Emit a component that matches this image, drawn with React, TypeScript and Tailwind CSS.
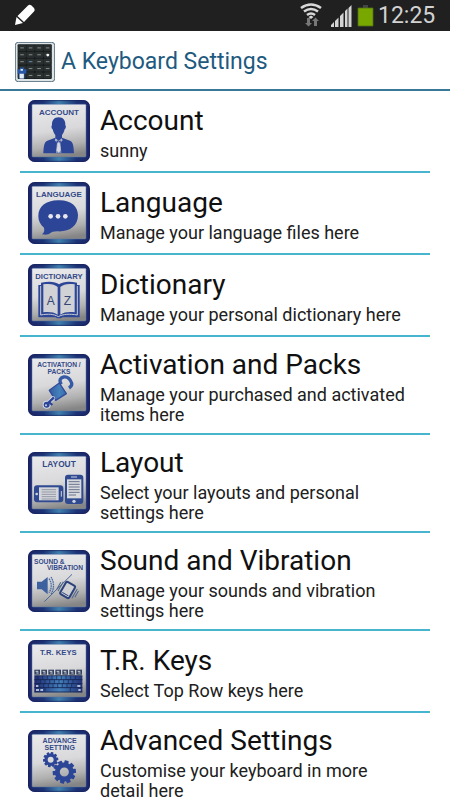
import React, { useId } from "react";

const BLUE = "#2c4596";

function Frame({ children, label }: { children: (fill: string) => React.ReactNode; label: string }) {
  const id = useId();
  return (
    <svg viewBox="23 16 186 186" role="img" aria-label={label} className="size-[62px] shrink-0">
      <defs>
        <linearGradient id={`${id}-edge`} x1="0" x2="1" y1="0" y2="0">
          <stop offset="0" stopColor="#1d2668" />
          <stop offset="0.25" stopColor="#1c3476" />
          <stop offset="0.5" stopColor="#3f80ae" />
          <stop offset="0.78" stopColor="#1c3476" />
          <stop offset="1" stopColor="#1d2668" />
        </linearGradient>
        <linearGradient id={`${id}-panel`} x1="0.3" x2="0.45" y1="0" y2="1">
          <stop offset="0" stopColor="#e9e9eb" />
          <stop offset="0.5" stopColor="#d9d9db" />
          <stop offset="0.8" stopColor="#b0b0b1" />
          <stop offset="1" stopColor="#858586" />
        </linearGradient>
        <linearGradient id={`${id}-shine`} gradientUnits="userSpaceOnUse" x1="45" x2="190" y1="0" y2="0">
          <stop offset="0" stopColor="#202d73" />
          <stop offset="0.5" stopColor="#4481bd" />
          <stop offset="1" stopColor="#202d73" />
        </linearGradient>
      </defs>
      <rect x="23" y="16" width="186" height="186" rx="20" fill={`url(#${id}-edge)`} />
      <rect x="25" y="18" width="182" height="182" rx="18" fill="none" stroke="#18215c" strokeWidth="3" opacity="0.7" />
      <rect x="35" y="29" width="162" height="158" rx="3" fill={`url(#${id}-panel)`} stroke="#5774a8" strokeWidth="1.5" />
      {children(`url(#${id}-shine)`)}
    </svg>
  );
}

function Caption({ x = 116, y, size = 23, children }: { x?: number; y: number; size?: number; children: string }) {
  return (
    <text x={x} y={y} fontSize={size} textAnchor="middle" fill="#344a88" className="font-['Liberation_Sans',sans-serif] font-bold">
      {children}
    </text>
  );
}

function AccountIcon() {
  return (
    <Frame label="Account">
      {() => (
        <>
          <Caption y={62} size={24}>ACCOUNT</Caption>
          <path fill={BLUE} d="M115 68c-14 0-21 10-20 24-3 1-2 10 2 12 2 9 5 13 8 17v8l-24 9c-8 3-11 13-12 38h92c-1-25-4-35-12-38l-24-9v-8c3-4 6-8 8-17 4-2 5-11 2-12 1-14-6-24-20-24z" />
          <path fill="#aeb7d0" d="m106 131 9 8 9-8 3 6-7 7 3 30h-16l3-30-7-7z" />
          <path fill={BLUE} d="m110 137 5 4 5-4 2 6-5 4 4 26h-12l4-26-5-4z" />
          <path fill="#d6d8df" d="m112 143h6l3 26-6 5-6-5z" />
        </>
      )}
    </Frame>
  );
}

function LanguageIcon() {
  return (
    <Frame label="Language">
      {() => (
        <>
          <Caption y={61} size={24}>LANGUAGE</Caption>
          <path fill={BLUE} d="M113 71c38-2 60 18 60 45 0 32-25 50-62 48-12 0-17 2-22 6-6 5-13 5-24 3 7-6 8-10 6-20-11-8-17-21-17-35 0-29 23-46 59-47z" />
          <circle cx="91" cy="119" r="7" fill="#e7e8ed" />
          <circle cx="113" cy="119" r="7" fill="#e7e8ed" />
          <circle cx="135" cy="119" r="7" fill="#e7e8ed" />
        </>
      )}
    </Frame>
  );
}

function DictionaryIcon() {
  return (
    <Frame label="Dictionary">
      {() => (
        <>
          <Caption y={60} size={23}>DICTIONARY</Caption>
          <path fill={BLUE} d="M54 79h8v-7c24-5 43-4 54 5 12-9 31-10 54-5v7h8v97h-52c-2 4-18 4-20 0H54z" />
          <path fill="#d1d2d5" d="M69 77c19-3 33-1 43 8v83c-12-8-26-9-43-7zM163 77c-19-3-33-1-43 8v83c12-8 26-9 43-7z" />
          <path fill="none" stroke="#c6cad5" strokeWidth="3" d="M61 82v87c23-4 40-3 53 5 14-8 34-9 57-5V82" />
          <text x="91" y="138" fontSize="36" textAnchor="middle" fill="#344577" className="font-['Liberation_Sans',sans-serif]">A</text>
          <text x="141" y="138" fontSize="36" textAnchor="middle" fill="#344577" className="font-['Liberation_Sans',sans-serif]">Z</text>
        </>
      )}
    </Frame>
  );
}

function ActivationIcon() {
  return (
    <Frame label="Activation and Packs">
      {(shine) => (
        <>
          <Caption y={55} size={20}>ACTIVATION /</Caption>
          <Caption y={75} size={20}>PACKS</Caption>
          <path fill="none" stroke="#365aa5" strokeWidth="10" d="M123 107c-8-12-3-20 7-22 13-2 20 8 24 18 2 7-2 11-8 15" />
          <path fill={shine} stroke="#304b98" strokeWidth="4" strokeLinejoin="round" d="m87 125 30-22 21 32-32 20z" />
          <path fill="none" stroke="#d4daea" strokeWidth="13" strokeLinecap="round" d="m98 149-17 17" />
          <circle cx="79" cy="168" r="12" fill="#d4daea" />
          <path fill="none" stroke={BLUE} strokeWidth="7" d="m101 146-22 21m7-7 10 9" />
          <circle cx="79" cy="168" r="9" fill={BLUE} />
          <circle cx="77" cy="170" r="3" fill="#cdd3e0" />
        </>
      )}
    </Frame>
  );
}

function LayoutIcon() {
  return (
    <Frame label="Layout">
      {() => (
        <>
          <Caption y={60} size={25}>LAYOUT</Caption>
          <rect x="41" y="116" width="88" height="51" rx="9" fill="#304a91" />
          <rect x="56" y="122" width="59" height="39" fill="#d4d5da" />
          <circle cx="49" cy="142" r="4" fill="#ccd2df" />
          <path stroke="#ccd2df" strokeWidth="3" d="M123 133v17" />
          <path stroke="#9399a7" strokeWidth="3" d="M64 129h43M64 136h43M64 143h43M64 150h43M64 157h43" />
          <rect x="134" y="84" width="55" height="88" rx="9" fill="#304a91" />
          <rect x="140" y="98" width="43" height="57" fill="#d9dade" />
          <path stroke="#ccd2df" strokeWidth="3" d="M152 91h18" />
          <circle cx="161" cy="164" r="5" fill="#ccd2df" />
          <path stroke="#68728c" strokeWidth="3" d="M145 105h33M145 113h33M145 121h33M145 129h33M145 137h33M145 145h22" />
        </>
      )}
    </Frame>
  );
}

function SoundIcon() {
  return (
    <Frame label="Sound and Vibration">
      {() => (
        <>
          <Caption x={87} y={57} size={20}>SOUND &amp;</Caption>
          <Caption x={134} y={76} size={20}>VIBRATION</Caption>
          <path fill="#3c619e" d="M50 111h14l18-14v52l-18-15H50z" />
          <path fill="none" stroke="#4a6da4" strokeWidth="4" d="M86 102c9 12 9 30 0 42M92 97c10 16 10 36 0 52" strokeDasharray="5 2" />
          <path stroke="#4c6692" strokeWidth="3" d="m155 89-83 82" />
          <g transform="rotate(30 142 135)">
            <rect x="127" y="115" width="31" height="42" rx="5" fill="#d0d1d4" stroke="#2c427c" strokeWidth="6" />
            <path stroke="#2c427c" strokeWidth="3" d="M132 150h21" />
            <path stroke="#4d6387" strokeWidth="3" d="M119 121v32M113 126v24M166 119v32M172 122v22" />
          </g>
        </>
      )}
    </Frame>
  );
}

function KeysIcon() {
  const topKeys = [42, 63, 84, 105, 126, 147, 168];
  return (
    <Frame label="T.R. Keys">
      {(shine) => (
        <>
          <Caption x={114} y={60} size={23}>T.R. KEYS</Caption>
          {topKeys.map((x) => (
            <g key={x}>
              <rect x={x} y="105" width="17" height="15" fill="#32405f" />
              <path stroke="#d1d5de" strokeWidth="3" d={`M${x + 4} 110h8m-6 5h7`} />
            </g>
          ))}
          <path fill={shine} d="M42 124h144v49H42z" />
          <path stroke="#14224e" strokeWidth="2.5" d="M42 123h144M42 135h144M42 147h144M42 159h144M42 172h144" />
          <path stroke="#14224e" strokeWidth="2" d="M53 123v12m14-12v12m14-12v12m14-12v12m14-12v12m14-12v12m14-12v12m14-12v12m14-12v12M60 135v12m14-12v12m14-12v12m14-12v12m14-12v12m14-12v12m14-12v12m14-12v12M56 147v12m14-12v12m14-12v12m14-12v12m14-12v12m14-12v12m14-12v12m14-12v12M74 159v12m76-12v12" />
          <path stroke="#dce5ef" strokeWidth="4" d="M47 154h7M47 166h9m4 0h8m103-12h9m-6 12h7" />
        </>
      )}
    </Frame>
  );
}

function Gear({ x, y, r }: { x: number; y: number; r: number }) {
  const tooth = r * 0.36;
  return (
    <g transform={`translate(${x} ${y})`}>
      {Array.from({ length: 10 }, (_, i) => (
        <rect key={i} x={-tooth / 2} y={-r} width={tooth} height={r * 0.4} rx="2" fill={BLUE} transform={`rotate(${i * 36 + 12})`} />
      ))}
      <circle r={r * 0.6} fill="none" stroke={BLUE} strokeWidth={r * 0.42} />
    </g>
  );
}

function AdvancedIcon() {
  return (
    <Frame label="Advanced Settings">
      {() => (
        <>
          <Caption x={118} y={54} size={21}>ADVANCE</Caption>
          <Caption x={118} y={77} size={21}>SETTING</Caption>
          <Gear x={91} y={105} r={23} />
          <Gear x={132} y={142} r={35} />
        </>
      )}
    </Frame>
  );
}

function KeyboardLogo() {
  return (
    <svg viewBox="46 123 122 122" role="img" aria-label="A Keyboard" className="size-10 shrink-0">
      <rect x="47" y="124" width="120" height="120" rx="9" fill="#dce4e7" stroke="#536b7a" strokeWidth="3" />
      <rect x="54" y="130" width="104" height="106" rx="3" fill="#171b1c" />
      {[0, 1, 2, 3, 4].map((row) =>
        [0, 1, 2, 3].map((col) => (
          <g key={`${row}-${col}`}>
            <rect x={56 + col * 26} y={133 + row * 21} width="23" height="16" rx="2" fill="#292e2f" stroke="#3c4343" />
            <path stroke={row === 2 && col === 1 ? "#6691bb" : "#878e8c"} strokeWidth="3" d={`M${62 + col * 26} ${141 + row * 21}h11`} />
          </g>
        )),
      )}
      <circle cx="146" cy="163" r="4" fill="#ffffff" />
      <path fill="#2857a5" d="M54 206h8v-5h12v5h7v13h-6v15H58v-15h-4z" />
      <path fill="#e4edf6" d="M60 220h13v14H60zM63 205h7v6h-7z" />
    </svg>
  );
}

function StatusBar() {
  return (
    <header className="flex h-[31px] shrink-0 items-center justify-between bg-[#202020] pr-4 pl-3">
      <svg viewBox="0 0 26 26" aria-hidden="true" className="size-[26px] fill-white">
        <path d="M3 22l1.500-8L11 20zM5.500 13 16 2.500q1.500-1.500 3.500 0l2.500 2.500q1.500 2 0 3.500L12 19z" />
      </svg>
      <div className="flex items-center">
        <svg viewBox="298 0 80 31" role="img" aria-label="Wi-Fi, full signal, full battery" className="h-[31px] w-20">
          <g fill="none" stroke="#d8d8d8" strokeWidth="2.6">
            <path d="M301 8q10-7 20 0M304 11.500q7-5 14 0M307 15q4-3 8 0" />
          </g>
          <path fill="#d8d8d8" d="m308.500 17 2.500-1.500 2.500 1.500-2.500 2z" />
          <path fill="#777777" d="M307 18h3v5h2l-3.500 3.500L305 23h2zM314 26h3v-5h2l-3.500-3.500L312 21h2z" />
          <path fill="#d4d4d4" d="M331 27v-2l3-3v5zM335 27v-6l3.500-3.500V27zM340 27V16l3.500-3.500V27zM345 27V11l2.500-2.500V27zM348.500 27V8l3-3v22z" />
          <path fill="#444444" d="M363 5h5v3h-5z" />
          <path fill="#78a800" stroke="#526d17" strokeWidth="0.800" d="M358 8h15v18h-15z" />
        </svg>
        <time className="w-14 text-right text-[23px] leading-[30px] text-[#d2d2d2]">12:25</time>
      </div>
    </header>
  );
}

const items = [
  { title: "Account", detail: "sunny", Icon: AccountIcon },
  { title: "Language", detail: "Manage your language files here", Icon: LanguageIcon },
  { title: "Dictionary", detail: "Manage your personal dictionary here", Icon: DictionaryIcon },
  { title: "Activation and Packs", detail: "Manage your purchased and activated items here", Icon: ActivationIcon },
  { title: "Layout", detail: "Select your layouts and personal settings here", Icon: LayoutIcon },
  { title: "Sound and Vibration", detail: "Manage your sounds and vibration settings here", Icon: SoundIcon },
  { title: "T.R. Keys", detail: "Select Top Row keys here", Icon: KeysIcon },
  { title: "Advanced Settings", detail: "Customise your keyboard in more detail here", Icon: AdvancedIcon },
];

export default function App() {
  return (
    <div className="flex h-screen flex-col overflow-hidden bg-white font-['Roboto',sans-serif]">
      <StatusBar />
      <div className="flex h-[60px] shrink-0 items-center gap-1.5 border-b-2 border-[#397897] px-[15px] pt-1">
        <KeyboardLogo />
        <h1 className="text-[23px] leading-7 text-[#1e5a80]">A Keyboard Settings</h1>
      </div>
      <main className="min-h-0 flex-1 overflow-y-auto px-5 [scrollbar-width:none]">
        <ul>
          {items.map(({ title, detail, Icon }) => (
            <li key={title} className="border-b-2 border-[#46b5cd]">
              <button type="button" className="flex min-h-20 w-full items-center gap-2.5 py-2 pr-5 pl-2 text-left">
                <Icon />
                <span className="block flex-1">
                  <span className="block text-[28px] leading-10 text-[#101010]">{title}</span>
                  <span className="block text-[18px] leading-5 text-[#202020]">{detail}</span>
                </span>
              </button>
            </li>
          ))}
        </ul>
      </main>
    </div>
  );
}
